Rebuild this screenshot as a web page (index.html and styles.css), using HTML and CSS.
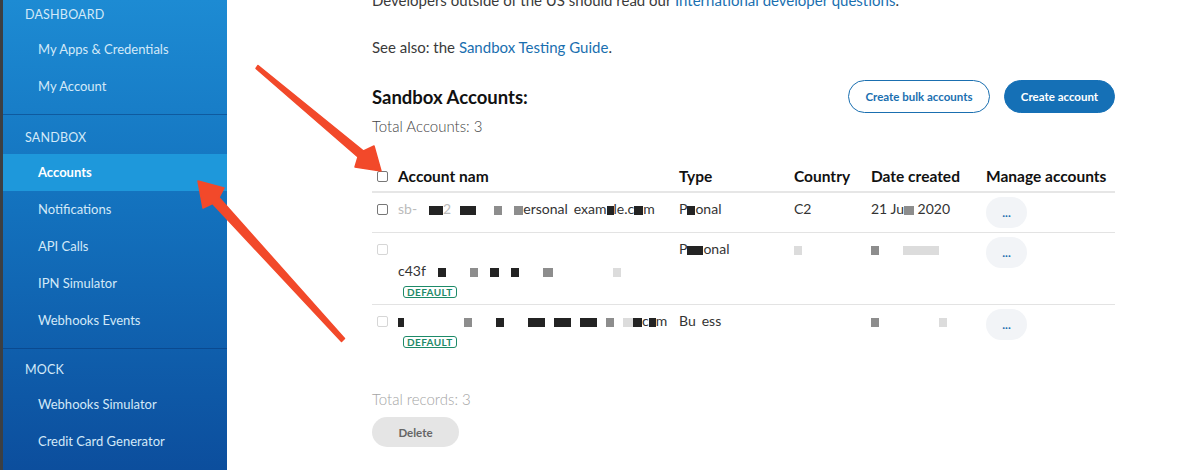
FILE: index.html
```html
<!DOCTYPE html>
<html lang="en">

<head>
    <meta charset="UTF-8">
    <meta name="viewport" content="width=device-width, initial-scale=1.0">
    <title>Sandbox Accounts</title>
    <link rel="stylesheet" href="styles.css">
</head>

<body>
    <div class="page">
        <div class="edge"></div>

        <nav class="sidebar">
            <div class="nav-section">
                <div class="nav-head">DASHBOARD</div>
                <a class="nav-item" href="#">My Apps &amp; Credentials</a>
                <a class="nav-item" href="#">My Account</a>
            </div>
            <div class="nav-section">
                <div class="nav-head">SANDBOX</div>
                <a class="nav-item active" href="#">Accounts</a>
                <a class="nav-item" href="#">Notifications</a>
                <a class="nav-item" href="#">API Calls</a>
                <a class="nav-item" href="#">IPN Simulator</a>
                <a class="nav-item" href="#">Webhooks Events</a>
            </div>
            <div class="nav-section">
                <div class="nav-head">MOCK</div>
                <a class="nav-item" href="#">Webhooks Simulator</a>
                <a class="nav-item" href="#">Credit Card Generator</a>
            </div>
        </nav>

        <main class="main">
            <p class="intro">Developers outside of the US should read our <a href="#">International developer questions</a>.</p>
            <p class="intro">See also: the <a href="#">Sandbox Testing Guide</a>.</p>

            <div class="accounts-head">
                <h2>Sandbox Accounts:</h2>
                <div class="actions">
                    <button class="btn btn-outline">Create bulk accounts</button>
                    <button class="btn btn-primary">Create account</button>
                </div>
            </div>
            <div class="total">Total Accounts: 3</div>

            <div class="table">
                <div class="row head">
                    <div class="cell"><span class="check"></span></div>
                    <div class="cell">Account nam</div>
                    <div class="cell">Type</div>
                    <div class="cell">Country</div>
                    <div class="cell">Date created</div>
                    <div class="cell">Manage accounts</div>
                </div>

                <div class="row">
                    <div class="cell"><span class="check"></span></div>
                    <div class="cell">
                        <span class="faint">sb-</span><span class="rd dark m1"></span><span class="faint">2</span><span class="rd dark w16 m2"></span><span class="rd mid w8 m3"></span><span class="rd mid w9 m1"></span>ersonal<span class="sp"></span>exam<span class="rd dark w7"></span>le.c<span class="rd dark w9"></span>m
                    </div>
                    <div class="cell">P<span class="rd dark w8"></span>onal</div>
                    <div class="cell">C2</div>
                    <div class="cell">21 Ju<span class="rd mid w10"></span> 2020</div>
                    <div class="cell"><button class="more">...</button></div>
                </div>

                <div class="row">
                    <div class="cell"><span class="check off"></span></div>
                    <div class="cell">
                        <div class="line">&nbsp;</div>
                        <div class="line">c43f<span class="rd dark w8 m1"></span><span class="rd mid w8 m4"></span><span class="rd dark w9 m1"></span><span class="rd dark w8 m1"></span><span class="rd mid w10 m4"></span><span class="rd light w8 m5"></span></div>
                        <span class="badge">DEFAULT</span>
                    </div>
                    <div class="cell">P<span class="rd dark w16"></span>onal</div>
                    <div class="cell"><span class="rd light w8"></span></div>
                    <div class="cell"><span class="rd mid w8"></span><span class="rd light w36 m4"></span></div>
                    <div class="cell"><button class="more">...</button></div>
                </div>

                <div class="row last">
                    <div class="cell"><span class="check off"></span></div>
                    <div class="cell">
                        <div class="line"><span class="rd dark w6"></span><span class="rd mid w8 m5"></span><span class="rd dark w8 m4"></span><span class="rd dark w17 m4"></span><span class="rd dark w17 m2"></span><span class="rd dark w17 m2"></span><span class="rd mid w8 m2"></span><span class="rd light w10 m2"></span><span class="rd dark w9"></span>c<span class="rd dark w7"></span>m</div>
                        <span class="badge">DEFAULT</span>
                    </div>
                    <div class="cell">Bu<span class="sp"></span>ess</div>
                    <div class="cell"></div>
                    <div class="cell"><span class="rd mid w8"></span><span class="rd light w8 m5"></span></div>
                    <div class="cell"><button class="more">...</button></div>
                </div>
            </div>

            <div class="records">Total records: 3</div>
            <button class="btn btn-delete">Delete</button>
        </main>

        <svg class="arrows" width="1200" height="470" viewBox="0 0 1200 470">
            <polygon points="256,68.5 358,157 355,167 381,171 374,146 363.5,151 258,65.5" />
            <polygon points="344.5,338.5 219,197.5 224,188 198,181 203,208 212.5,203.5 341.5,341.5" />
        </svg>
    </div>
</body>

</html>
```

FILE: styles.css
```css
* {
    margin: 0;
    padding: 0;
    box-sizing: border-box;
    font-family: Lato, "Open Sans", sans-serif;
}

html,
body {
    width: 1200px;
    height: 470px;
    overflow: hidden;
    background-color: #fff;
}

.page {
    position: relative;
    display: flex;
    height: 470px;
}

.edge {
    width: 3px;
    background-color: #3c3f43;
}

/* sidebar */

.sidebar {
    width: 224px;
    padding-top: 1px;
    background: linear-gradient(180deg, #1d8bd3 0%, #1371bd 45%, #0c4e9d 100%);
    color: #d3e9f8;
}

.nav-section {
    display: flex;
    flex-direction: column;
    padding-bottom: 9px;
    border-top: 1px solid rgba(4, 48, 110, 0.45);
}

.nav-section:first-child {
    border-top: none;
}

.nav-head {
    padding: 7px 0 0 22px;
    line-height: 32px;
    font-size: 12.5px;
    letter-spacing: 0.2px;
}

.nav-section:first-child .nav-head {
    padding-top: 0;
    line-height: 28px;
    margin-bottom: 2px;
}

.nav-section:last-child .nav-head {
    padding-top: 5px;
}

.nav-item {
    display: block;
    height: 37px;
    line-height: 37px;
    padding-left: 35px;
    font-size: 13px;
    color: #d3e9f8;
    text-decoration: none;
}

.nav-item.active {
    background-color: #1e98db;
    color: #fff;
    font-weight: 700;
}

/* main */

.main {
    flex: 1;
    padding: 0 85px 0 145px;
    color: #2c2e2f;
    font-size: 15px;
}

.intro {
    line-height: 24px;
    margin-bottom: 23px;
    color: #3a3a3a;
}

.intro:first-child {
    margin-top: -12px;
}

.intro + .intro {
    margin-bottom: 21px;
}

.intro a {
    color: #1a6fb0;
    text-decoration: none;
}

.accounts-head {
    display: flex;
    justify-content: space-between;
    align-items: center;
}

.accounts-head h2 {
    font-size: 18.5px;
    font-weight: 700;
    color: #111;
}

.actions {
    display: flex;
    gap: 14px;
}

.btn {
    height: 33px;
    border-radius: 17px;
    font-size: 11.5px;
    font-weight: 700;
    padding: 0 12px;
    cursor: pointer;
}

.btn-outline {
    background-color: #fff;
    border: 1px solid #1a6fb0;
    color: #1a6fb0;
    width: 142px;
}

.btn-primary {
    background-color: #1570b6;
    border: 1px solid #1570b6;
    color: #fff;
    width: 111px;
}

.total {
    margin-top: 2px;
    line-height: 22px;
    color: #444;
    font-weight: 300;
}

/* table */

.table {
    margin-top: 25px;
}

.row {
    display: grid;
    grid-template-columns: 26px 281px 115px 77px 115px 1fr;
    padding: 5px 0 4px;
    border-bottom: 1px solid #e3e3e3;
    line-height: 22px;
    font-size: 14px;
    color: #333;
}

.row.head {
    height: 31px;
    padding: 3px 0 0;
    font-size: 15.5px;
    font-weight: 700;
    color: #111;
    border-bottom: 2px solid #e6e6e6;
}

.row.last {
    border-bottom: none;
}

.check {
    display: inline-block;
    width: 11px;
    height: 11px;
    margin: 6px 0 0 5px;
    border: 1px solid #777;
    border-radius: 2px;
    vertical-align: top;
}

.check.off {
    border-color: #d6d6d6;
}

.faint {
    color: #bbb;
}

.sp {
    display: inline-block;
    width: 6px;
}

.rd {
    display: inline-block;
    height: 9px;
    width: 14px;
    vertical-align: middle;
}

.dark {
    background-color: #232323;
}

.mid {
    background-color: #8d8d8d;
}

.light {
    background-color: #dcdcdc;
}

.w6 { width: 6px; }
.w7 { width: 7px; }
.w8 { width: 8px; }
.w9 { width: 9px; }
.w10 { width: 10px; }
.w16 { width: 16px; }
.w17 { width: 17px; }
.w36 { width: 36px; }

.m1 { margin-left: 12px; }
.m2 { margin-left: 9px; }
.m3 { margin-left: 18px; }
.m4 { margin-left: 24px; }
.m5 { margin-left: 60px; }

.badge {
    display: block;
    width: fit-content;
    margin: 4px 0 2px 5px;
    padding: 0 3px;
    height: 12px;
    line-height: 10px;
    border: 1px solid #1d8a68;
    border-radius: 3px;
    color: #1d8a68;
    font-size: 10px;
    font-weight: 700;
    letter-spacing: 0.4px;
}

.more {
    width: 41px;
    height: 31px;
    margin-top: -1px;
    border: none;
    border-radius: 16px;
    background-color: #f2f4f7;
    color: #1a6fb0;
    font-size: 12px;
    font-weight: 700;
}

.records {
    margin-top: 34px;
    line-height: 22px;
    color: #a5a5a5;
    font-weight: 300;
}

.btn-delete {
    margin-top: 7px;
    width: 87px;
    height: 30px;
    border: none;
    border-radius: 15px;
    background-color: #e5e5e5;
    color: #666;
    font-size: 11.5px;
}

.arrows {
    position: absolute;
    left: 0;
    top: 0;
    pointer-events: none;
}

.arrows polygon {
    fill: #f2492a;
    stroke: #f2492a;
    stroke-width: 1.5;
    stroke-linejoin: round;
}
```
